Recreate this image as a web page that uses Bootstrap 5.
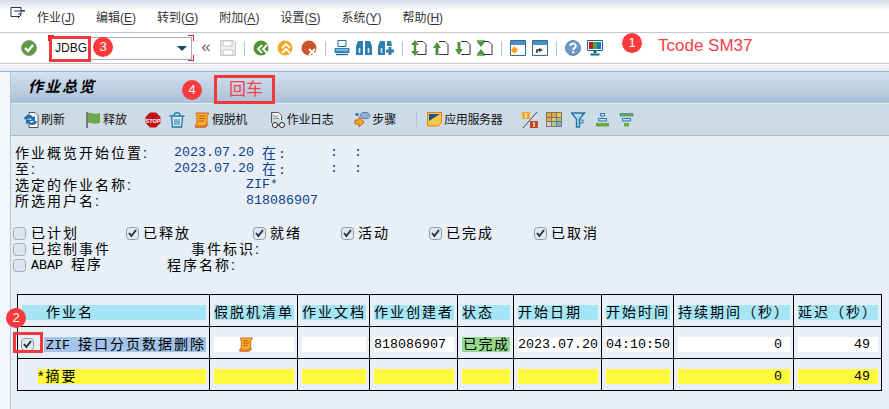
<!DOCTYPE html>
<html lang="zh">
<head>
<meta charset="UTF-8">
<title>作业总览</title>
<link href="https://cdn.jsdelivr.net/npm/bootstrap@5.3.2/dist/css/bootstrap.min.css" rel="stylesheet">
<style>
body { width: 889px; height: 409px; overflow: hidden; position: relative; background: #f3f6fa; font-family: "Liberation Sans", "Noto Sans CJK SC", sans-serif; color: #000; }
svg { display: block; flex: none; }
.menu-bar { height: 33px; padding-left: 10px; background: linear-gradient(#d5dae6, #fff 11px); border-bottom: 1px solid #c4cad3; font-size: 12px; color: #333; }
.menu-bar u { text-underline-offset: 2px; }
.menu-logo { margin-right: 11px; margin-top: -6px; }
.menu-entry { margin-right: 21px; margin-top: 3px; }
.sys-bar { height: 31px; padding-left: 21px; background: #fff; border-bottom: 1px solid #c4cad3; }
.cmd-box { width: 143px; height: 23px; margin-left: 12px; background: #fff; border: 1px solid #a4adb8; padding: 0 4px 0 5px; font-size: 12px; color: #111; }
.cmd-text { border-right: 1px solid #111; line-height: 14px; padding-right: 1px; }
.cmd-caret { width: 0; height: 0; border-left: 5px solid transparent; border-right: 5px solid transparent; border-top: 5px solid #1d3f74; }
.tool-sep { width: 1px; height: 15px; background: #a9c3da; }
.chev { color: #667; font-size: 17px; line-height: 1; width: 28px; text-align: center; margin-top: -3px; }
.band { height: 8px; background: linear-gradient(#f9fafc, #e3e7ee); border-bottom: 1px solid #a2b2c6; }
.main-panel { margin-left: 10px; height: 337px; background: #e8eff7; border-left: 1px solid #b3c5d9; }
.title-bar { height: 32px; padding-left: 17px; background: linear-gradient(#d4e1ee, #a9c1d9); border-bottom: 1px solid #e4ecf4; font-size: 15px; font-weight: 700; font-style: italic; letter-spacing: 2px; }
.app-bar { height: 32px; padding-left: 12px; background: #cddbe7; border-bottom: 1px solid #a7bcd3; font-size: 12px; color: #111; }
.app-text { margin-left: 2px; }
.tight-text { letter-spacing: -.4px; }
.sheet { padding: 9px 0 0 4px; }
.cell-row { height: 16px; line-height: 16px; font-size: 14px; letter-spacing: 2px; white-space: nowrap; }
.mono, .bar.mono { font-family: "Liberation Mono", monospace; font-size: 13.33px; letter-spacing: 0; }
.val { color: #0d3f8c; }
.lbl-col { width: 159px; }
.date-col { width: 88px; }
.at-col { width: 68px; }
.time-col { width: 24px; }
.blank-col { width: 72px; }
.gap-row { height: 16px; }
.status-grid { display: grid; margin-left: -2px; grid-template-columns: 113px 127px 88px 88px 105px auto; }
.status-item { display: flex; align-items: center; }
.first-wide { width: 178px; margin-left: -2px; }
.first-mid { width: 154px; margin-left: -2px; }
.sap-check { width: 13px; height: 13px; margin: 0 5px 0 0; flex: none; border: 1px solid #9aa7b5; border-radius: 2px; background-color: #dde7f2; }
.sap-check:checked { margin-right: 4px; background-color: #e4e9f0; border-color: #8e98a5; background-image: url("data:image/svg+xml,%3Csvg xmlns='http://www.w3.org/2000/svg' viewBox='0 0 13 13'%3E%3Cpath d='M3 6l2.4 3L10 3' fill='none' stroke='%2325304a' stroke-width='2'/%3E%3C/svg%3E"); background-size: 13px 13px; }
.job-table { width: 865px; margin: 21px 0 0 2px; table-layout: fixed; border-collapse: collapse; --bs-table-bg: transparent; }
.job-table td { height: 32px; padding: 10px 3px 6px 4px; border: 1px solid #000; vertical-align: top; }
.bar { display: block; height: 15px; line-height: 15px; font-size: 14px; letter-spacing: 2px; white-space: nowrap; overflow: hidden; }
.bar-head { background: #a6e5f6; }
.bar-white { background: #fff; }
.bar-job { background: #a3c3e9; margin-left: 10px; padding-left: 2px; }
.bar-done { background: #95da8c; padding-left: 1px; letter-spacing: 1.5px; }
.bar-sum { background: #fff93d; }
.bar-spool { padding-left: 24px; }
.num { text-align: right; padding-right: 8px; }
.job-cell { display: flex; align-items: center; height: 15px; }
.job-cell .sap-check { margin: 0 0 0 -1px; }
.job-cell .bar { flex: 1; }
.dot { position: absolute; width: 20px; height: 20px; border-radius: 50%; background: #f93a3c; color: #fff; font-size: 13px; line-height: 20px; text-align: center; }
.hl-box { position: absolute; border: 3px solid #f0393c; }
.note { position: absolute; color: #f5404a; font-size: 17px; line-height: 20px; white-space: nowrap; }
.corner { position: absolute; width: 6px; height: 6px; border: 0 solid #e0262a; }
</style>
</head>
<body>

<div class="menu-bar d-flex align-items-center">
  <svg class="menu-logo" width="16" height="13" viewBox="0 0 16 13"><path d="M1 .5h10v3h4M1 .5v9h8M4 4h11M8 7h3M11 4v4l-3 3" fill="none" stroke="#26364f" stroke-width="1"/></svg>
  <span class="menu-entry">作业(<u>J</u>)</span>
  <span class="menu-entry">编辑(<u>E</u>)</span>
  <span class="menu-entry">转到(<u>G</u>)</span>
  <span class="menu-entry">附加(<u>A</u>)</span>
  <span class="menu-entry">设置(<u>S</u>)</span>
  <span class="menu-entry">系统(<u>Y</u>)</span>
  <span class="menu-entry">帮助(<u>H</u>)</span>
</div>

<div class="sys-bar d-flex align-items-center">
  <svg width="16" height="16" viewBox="0 0 16 16"><circle cx="8" cy="8" r="7.5" fill="#5d9c3e" stroke="#8a9a86"/><path d="M4 8l3 3 5-6" fill="none" stroke="#fff" stroke-width="2.4"/></svg>
  <div class="cmd-box d-flex align-items-center justify-content-between"><span class="cmd-text">JDBG</span><span class="cmd-caret"></span></div>
  <span class="chev">«</span>
  <svg width="16" height="16" viewBox="0 0 16 16"><path d="M.5.5h13l2 2v13H.5z" fill="#eceef0" stroke="#c2c6ca"/><path d="M3 1h9v5H3zM3 10h10v5H3z" fill="#fff" stroke="#c2c6ca"/></svg>
  <span class="tool-sep ms-2 me-2"></span>
  <svg width="16" height="16" viewBox="0 0 16 16"><circle cx="8" cy="8" r="7.5" fill="#4f9438"/><path d="M9 5L5 9l4 4M14 5l-4 4 4 4" fill="none" stroke="#fff" stroke-width="1.8"/></svg>
  <svg class="ms-2" width="16" height="16" viewBox="0 0 16 16"><circle cx="8" cy="8" r="7.5" fill="#f2a623"/><path d="M5 8l4-4 4 4M5 13l4-4 4 4" fill="none" stroke="#fff" stroke-width="1.8"/></svg>
  <svg class="ms-2" width="16" height="16" viewBox="0 0 16 16"><circle cx="8" cy="8" r="7.5" fill="#c9572b"/><path d="M8 9l6 6M14 9l-6 6" stroke="#fff" stroke-width="2"/></svg>
  <span class="tool-sep ms-2 me-2"></span>
  <svg width="16" height="16" viewBox="0 0 16 16"><path d="M4 .5h8v6H4z" fill="#fff" stroke="#1f6f9f"/><path d="M.5 8h15v5H.5z" fill="#2f86b8"/><path d="M2 14.500h12" stroke="#1f6f9f" stroke-width="1.4"/><path d="M2 10h12" stroke="#d8ecf6"/></svg>
  <svg style="margin-left:6px" width="16" height="16" viewBox="0 0 16 16"><path d="M2 1h5v14H0V6zM9 1h5l2 5v9H9z" fill="#2f7fb0"/><path d="M3.500 8v5M12.500 8v5" stroke="#d6e9f4" stroke-width="1.6"/></svg>
  <svg style="margin-left:6px" width="16" height="16" viewBox="0 0 16 16"><path d="M2 1h5v14H0V6zM9 1h4l1 5H9z" fill="#2f7fb0"/><path d="M3.500 8v5" stroke="#d6e9f4" stroke-width="1.6"/><path d="M12 7v8M8 11h8" stroke="#2f7fb0" stroke-width="3"/></svg>
  <span class="tool-sep ms-2 me-2"></span>
  <svg width="16" height="16" viewBox="0 0 16 16"><path d="M6 1.500h6l3 3v10H6" fill="#fff" stroke="#333"/><path d="M4 0l4 5H0zM4 16l4-5H0z" fill="#4f9438"/><path d="M4 5v6" stroke="#4f9438" stroke-width="2.4"/></svg>
  <svg style="margin-left:6px" width="16" height="16" viewBox="0 0 16 16"><path d="M6 1.500h6l3 3v10H6" fill="#fff" stroke="#333"/><path d="M4 2l4 6H0z" fill="#4f9438"/><path d="M4 8v7" stroke="#4f9438" stroke-width="3"/></svg>
  <svg style="margin-left:6px" width="16" height="16" viewBox="0 0 16 16"><path d="M6 1.500h6l3 3v10H6" fill="#fff" stroke="#333"/><path d="M4 15l4-6H0z" fill="#4f9438"/><path d="M4 2v7" stroke="#4f9438" stroke-width="3"/></svg>
  <svg style="margin-left:6px" width="16" height="16" viewBox="0 0 16 16"><path d="M6 1.500h6l3 3v10H6" fill="#fff" stroke="#333"/><path d="M4 7l4-5H0zM4 9l4 5H0z" fill="#4f9438"/><path d="M0 1h8M0 15h8" stroke="#4f9438" stroke-width="1.6"/></svg>
  <span class="tool-sep ms-2 me-2"></span>
  <svg width="16" height="16" viewBox="0 0 16 16"><path d="M.5.5h15v15H.5z" fill="#fff" stroke="#2a6f9e"/><path d="M1 1h14v4H1z" fill="#4a8fbd"/><circle cx="4.500" cy="10" r="2.600" fill="#f5a11c"/><path d="M4.500 6v8M.8 10h7.400M2 7.500l5 5M7 7.500l-5 5" stroke="#f5a11c"/></svg>
  <svg style="margin-left:6px" width="16" height="16" viewBox="0 0 16 16"><path d="M.5.5h15v15H.5z" fill="#fff" stroke="#2a6f9e"/><path d="M1 1h14v4H1z" fill="#4a8fbd"/><path d="M5 13V10h3" fill="none" stroke="#333" stroke-width="1.6"/><path d="M7 8l4 2-4 2z" fill="#333"/></svg>
  <span class="tool-sep ms-2 me-2"></span>
  <svg width="16" height="16" viewBox="0 0 16 16"><circle cx="8" cy="8" r="7.500" fill="#6b9cc7" stroke="#5c88ae"/><path d="M5.400 6c0-3.200 5.400-3.200 5.400 0 0 2-2.600 2-2.600 4" fill="none" stroke="#fff" stroke-width="1.900"/><path d="M7.200 11.200h2v2h-2z" fill="#fff"/></svg>
  <svg style="margin-left:6px" width="16" height="16" viewBox="0 0 16 16"><path d="M.5.5h15v10H.5z" fill="#fff" stroke="#17668f"/><path d="M2 2h4v7H2z" fill="#c81a1a"/><path d="M6 2h4v7H6z" fill="#57a23c"/><path d="M10 2h4v7h-4z" fill="#1878c4"/><path d="M6.500 11h3v2h-3zM3.500 13.500h9v2h-9z" fill="#17668f"/></svg>
</div>

<div class="band"></div>

<div class="main-panel">
  <div class="title-bar d-flex align-items-center">作业总览</div>

  <div class="app-bar d-flex align-items-center">
    <svg width="16" height="16" viewBox="0 0 16 16"><path d="M6 .5h6l3 3v12H6z" fill="#fff" stroke="#555"/><path d="M1 7a5 5 0 0 1 9-2l2-1v5H7l1.500-1.800A2.600 2.600 0 0 0 4 8zM14 9a5 5 0 0 1-9 2l-2 1V8h5l-1.500 1.600A2.600 2.600 0 0 0 11 9z" fill="#1f6fae"/></svg>
    <span class="app-text">刷新</span>
    <svg style="margin-left:20px" width="16" height="16" viewBox="0 0 16 16"><path d="M1 0h2v16H1z" fill="#777"/><path d="M3 1c4-1 4 2 12 0v10c-7 2-8-1-12 0z" fill="#6fa84a"/></svg>
    <span class="app-text">释放</span>
    <svg style="margin-left:18px" width="16" height="16" viewBox="0 0 16 16"><path d="M5 .5h6L15.500 5v6L11 15.500H5L.5 11V5z" fill="#c5101a"/><text x="8" y="10.500" font-size="5.500" font-weight="700" text-anchor="middle" fill="#fff" font-family="Liberation Sans">STOP</text></svg>
    <svg style="margin-left:8px" width="16" height="16" viewBox="0 0 16 16"><path d="M.5 4h15M5 3c0-3 6-3 6 0M2.500 5l1 10h9l1-10" fill="#d5e8f3" stroke="#2176a8" stroke-width="1.300"/><path d="M6 7v6M8 7v6M10 7v6" stroke="#2176a8"/></svg>
    <svg style="margin-left:9px" width="16" height="16" viewBox="0 0 16 16"><path d="M2 1h13l-2 3v7l-2 3H1l2-3V5z" fill="#f4ad2a" stroke="#d5641a"/><path d="M1 15h10l3-3" fill="none" stroke="#d5641a" stroke-width="1.500"/><path d="M5 4h6M5 6.500h6M5 9h5" stroke="#c4561a"/></svg>
    <span class="app-text tight-text">假脱机</span>
    <svg style="margin-left:23px" width="18" height="16" viewBox="0 0 18 16"><path d="M1.500.5h7l3 3V8M1.500.500V11" fill="#fff" stroke="#555"/><path d="M3 4h6M3 6.500h6" stroke="#999"/><circle cx="5" cy="13" r="2.500" fill="#fff" stroke="#222"/><circle cx="12" cy="13" r="2.500" fill="#fff" stroke="#222"/><path d="M7.500 13h2" stroke="#222"/></svg>
    <span class="tight-text" style="margin-left:-1px">作业日志</span>
    <svg style="margin-left:21px" width="18" height="16" viewBox="0 0 18 16"><ellipse cx="11" cy="3.500" rx="5" ry="3.200" fill="#8fb0cf" stroke="#5b7c9d"/><circle cx="3" cy="2.500" r="1.800" fill="#3c7ea9"/><path d="M1 8h4V5l5 5-5 5v-3H1z" fill="#f5a623" stroke="#c8641a"/></svg>
    <span>步骤</span>
    <span class="tool-sep" style="margin:0 10px 0 20px"></span>
    <svg width="15" height="15" viewBox="0 0 15 15"><path d="M.5.500h14v10l-3 3.500H.5z" fill="#f9c74a" stroke="#e87f12"/><path d="M2 2h11L2 9z" fill="#12568f"/></svg>
    <span class="app-text tight-text">应用服务器</span>
    <svg style="margin-left:20px" width="16" height="16" viewBox="0 0 16 16"><path d="M0 0h8v7H0z" fill="#f2a62a"/><path d="M8 9h8v7H8z" fill="#c9452a"/><path d="M1 16L15 0" stroke="#444"/><path d="M5 2H3l1.500 1.500L3 5h2M13 11h-2l1.500 1.500L11 14h2" fill="none" stroke="#fff"/></svg>
    <svg style="margin-left:8px" width="16" height="16" viewBox="0 0 16 16"><path d="M0 0h16v15H0z" fill="#777"/><path d="M1 1h4v4H1z" fill="#f2a32a"/><path d="M6 1h4v4H6z" fill="#f2a32a"/><path d="M11 1h4v4h-4z" fill="#f2c24a"/><path d="M1 6h4v3H1z" fill="#f2a32a"/><path d="M6 6h4v3H6z" fill="#c8c89a"/><path d="M11 6h4v3h-4z" fill="#9cc46a"/><path d="M1 10h4v4H1z" fill="#e8c4c4"/><path d="M6 10h4v4H6z" fill="#a8cc8a"/><path d="M11 10h4v4h-4z" fill="#8aa8c8"/></svg>
    <svg style="margin-left:9px" width="15" height="16" viewBox="0 0 15 16"><path d="M.5 1h13L8.500 7v8h-3V7z" fill="#b9d7ea" stroke="#1f77a8" stroke-width="1.400"/><path d="M9 8h3v3H9" fill="none" stroke="#1f77a8"/></svg>
    <svg style="margin-left:9px" width="15" height="14" viewBox="0 0 15 14"><path d="M5.500.5h4v2.500h-4zM3.500 5.500h8V8h-8z" fill="#cfe3ef" stroke="#1f77a8"/><path d="M1 10h13v3.500H1z" fill="#6ea83c"/></svg>
    <svg style="margin-left:9px" width="15" height="14" viewBox="0 0 15 14"><path d="M1 .5h13V3H1z" fill="#6ea83c" stroke="#1f77a8" stroke-width=".6"/><path d="M3.500 5.500h8V8h-8z" fill="#cfe3ef" stroke="#1f77a8"/><path d="M5 10h5v3.500H5z" fill="#6ea83c"/></svg>
  </div>

  <div class="sheet">
    <div class="cell-row d-flex"><span class="lbl-col">作业概览开始位置:</span><span class="date-col mono val">2023.07.20</span><span class="at-col val">在<span class="mono">:</span></span><span class="time-col mono val">:</span><span class="mono val">:</span></div>
    <div class="cell-row d-flex"><span class="lbl-col">至:</span><span class="date-col mono val">2023.07.20</span><span class="at-col val">在<span class="mono">:</span></span><span class="time-col mono val">:</span><span class="mono val">:</span></div>
    <div class="cell-row d-flex"><span class="lbl-col">选定的作业名称:</span><span class="blank-col"></span><span class="mono val">ZIF*</span></div>
    <div class="cell-row d-flex"><span class="lbl-col">所选用户名:</span><span class="blank-col"></span><span class="mono val">818086907</span></div>
    <div class="gap-row"></div>
    <div class="cell-row status-grid">
      <label class="status-item"><input class="form-check-input sap-check" type="checkbox">已计划</label>
      <label class="status-item"><input class="form-check-input sap-check" type="checkbox" checked>已释放</label>
      <label class="status-item"><input class="form-check-input sap-check" type="checkbox" checked>就绪</label>
      <label class="status-item"><input class="form-check-input sap-check" type="checkbox" checked>活动</label>
      <label class="status-item"><input class="form-check-input sap-check" type="checkbox" checked>已完成</label>
      <label class="status-item"><input class="form-check-input sap-check" type="checkbox" checked>已取消</label>
    </div>
    <div class="cell-row d-flex">
      <label class="status-item first-wide"><input class="form-check-input sap-check" type="checkbox">已控制事件</label>
      <span>事件标识:</span>
    </div>
    <div class="cell-row d-flex">
      <label class="status-item first-mid"><input class="form-check-input sap-check" type="checkbox"><span><span class="mono">ABAP&nbsp;</span>程序</span></label>
      <span>程序名称:</span>
    </div>

    <table class="job-table">
      <colgroup><col style="width:192px"><col style="width:88px"><col style="width:72px"><col style="width:88px"><col style="width:56px"><col style="width:88px"><col style="width:72px"><col style="width:120px"><col style="width:88px"></colgroup>
      <tr>
        <td><span class="bar bar-head ps-4">作业名</span></td>
        <td><span class="bar bar-head">假脱机清单</span></td>
        <td><span class="bar bar-head">作业文档</span></td>
        <td><span class="bar bar-head">作业创建者</span></td>
        <td><span class="bar bar-head">状态</span></td>
        <td><span class="bar bar-head">开始日期</span></td>
        <td><span class="bar bar-head">开始时间</span></td>
        <td><span class="bar bar-head">持续期间（秒）</span></td>
        <td><span class="bar bar-head">延迟（秒）</span></td>
      </tr>
      <tr>
        <td><div class="job-cell"><input class="form-check-input sap-check" type="checkbox" checked><span class="bar bar-job"><span class="mono">ZIF&nbsp;</span>接口分页数据删除</span></div></td>
        <td><span class="bar bar-white bar-spool"><svg width="16" height="15" viewBox="0 0 16 16"><path d="M2 1h13l-2 3v7l-2 3H1l2-3V5z" fill="#f4ad2a" stroke="#d5641a"/><path d="M1 15h10l3-3" fill="none" stroke="#d5641a" stroke-width="1.500"/><path d="M5 4h6M5 6.500h6M5 9h5" stroke="#c4561a"/></svg></span></td>
        <td><span class="bar bar-white"></span></td>
        <td><span class="bar bar-white mono">818086907</span></td>
        <td><span class="bar bar-done">已完成</span></td>
        <td><span class="bar bar-white mono">2023.07.20</span></td>
        <td><span class="bar bar-white mono">04:10:50</span></td>
        <td><span class="bar bar-white mono num">0</span></td>
        <td><span class="bar bar-white mono num">49</span></td>
      </tr>
      <tr>
        <td><span class="bar bar-sum ms-3">*摘要</span></td>
        <td><span class="bar bar-sum"></span></td>
        <td><span class="bar bar-sum"></span></td>
        <td><span class="bar bar-sum"></span></td>
        <td><span class="bar bar-sum"></span></td>
        <td><span class="bar bar-sum"></span></td>
        <td><span class="bar bar-sum"></span></td>
        <td><span class="bar bar-sum mono num">0</span></td>
        <td><span class="bar bar-sum mono num">49</span></td>
      </tr>
    </table>
  </div>
</div>

<!-- 标注 -->
<div class="hl-box" style="left:49px;top:36px;width:42px;height:26px"></div>
<div class="corner" style="left:48px;top:35px;border-top-width:1px;border-left-width:1px"></div>
<div class="corner" style="left:188px;top:35px;border-top-width:1px;border-right-width:1px"></div>
<div class="corner" style="left:188px;top:55px;border-bottom-width:1px;border-right-width:1px"></div>
<div class="dot" style="left:93px;top:37px">3</div>
<div class="dot" style="left:622px;top:33px">1</div>
<div class="note" style="left:658px;top:36px">Tcode SM37</div>
<div class="dot" style="left:182px;top:80px">4</div>
<div class="hl-box" style="left:214px;top:75px;width:61px;height:29px"></div>
<div class="note" style="left:229px;top:80px">回车</div>
<div class="dot" style="left:6px;top:308px">2</div>
<div class="hl-box" style="left:13px;top:332px;width:30px;height:21px"></div>

<script src="https://cdn.jsdelivr.net/npm/bootstrap@5.3.2/dist/js/bootstrap.bundle.min.js"></script>
</body>
</html>
